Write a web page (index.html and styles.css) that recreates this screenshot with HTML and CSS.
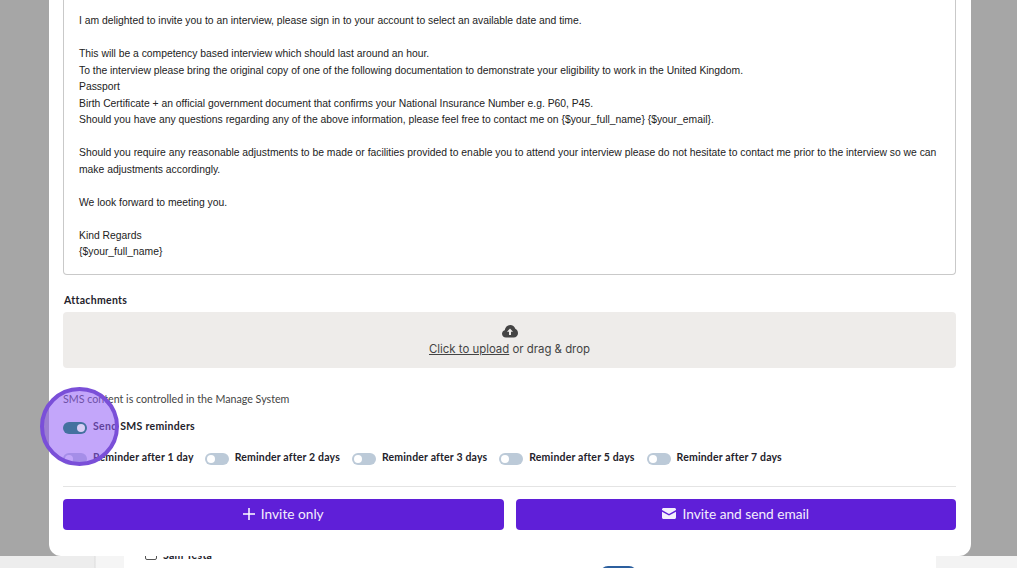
FILE: index.html
```html
<!DOCTYPE html>
<html lang="en">
<head>
    <meta charset="UTF-8">
    <meta name="viewport" content="width=device-width, initial-scale=1.0">
    <title>Invite to interview</title>
    <link rel="stylesheet" href="styles.css">
</head>
<body>
    <div class="backdrop">
        <div class="modal">
            <div class="message">
                <p>I am delighted to invite you to an interview, please sign in to your account to select an available date and time.</p>
                <p>This will be a competency based interview which should last around an hour.<br>
                To the interview please bring the original copy of one of the following documentation to demonstrate your eligibility to work in the United Kingdom.<br>
                Passport<br>
                Birth Certificate + an official government document that confirms your National Insurance Number e.g. P60, P45.<br>
                Should you have any questions regarding any of the above information, please feel free to contact me on {$your_full_name} {$your_email}.</p>
                <p>Should you require any reasonable adjustments to be made or facilities provided to enable you to attend your interview please do not hesitate to contact me prior to the interview so we can make adjustments accordingly.</p>
                <p>We look forward to meeting you.</p>
                <p>Kind Regards<br>
                {$your_full_name}</p>
            </div>

            <div class="label">Attachments</div>
            <div class="upload">
                <svg class="cloud" viewBox="0 0 16 13" width="16" height="13">
                    <path fill="#444" d="M4 12.500C1.800 12.500 0 10.900 0 8.800c0-1.700 1.100-3.100 2.700-3.600C3.200 2.200 5.400 0 8.200 0c2.400 0 4.400 1.500 5.100 3.700C15 4.500 16 6.200 16 8.200c0 2.400-1.900 4.300-4.300 4.300z"/>
                    <path fill="#eeecea" d="M8 3.600l3 3.100H9v3.300H7V6.700H5z"/>
                </svg>
                <div><span class="upload-link">Click to upload</span> or drag &amp; drop</div>
            </div>

            <p class="sms-note">SMS content is controlled in the Manage System</p>
            <div class="toggle-row sms-row">
                <div class="toggle-item"><span class="toggle on"></span>Send SMS reminders</div>
            </div>
            <div class="toggle-row days-row">
                <div class="toggle-item"><span class="toggle"></span>Reminder after 1 day</div>
                <div class="toggle-item"><span class="toggle"></span>Reminder after 2 days</div>
                <div class="toggle-item"><span class="toggle"></span>Reminder after 3 days</div>
                <div class="toggle-item"><span class="toggle"></span>Reminder after 5 days</div>
                <div class="toggle-item"><span class="toggle"></span>Reminder after 7 days</div>
            </div>

            <div class="actions">
                <button class="btn">
                    <svg viewBox="0 0 12 12" width="12" height="12"><path stroke="#fff" stroke-width="1.500" d="M6 0v12M0 6h12"/></svg>
                    <span>Invite only</span>
                </button>
                <button class="btn">
                    <svg viewBox="0 0 14 11" width="14" height="11"><path fill="#f3eefc" d="M1.500 0h11C13.300 0 14 .7 14 1.500v.6L7 6 0 2.100v-.6C0 .7.700 0 1.500 0zM0 3.800l7 3.800 7-3.800v5.700c0 .8-.7 1.500-1.500 1.500h-11C.7 11 0 10.300 0 9.500z"/></svg>
                    <span>Invite and send email</span>
                </button>
            </div>
        </div>
    </div>

    <div class="under">
        <div class="under-side"></div>
        <div class="under-main">
            <span class="check"></span>
            <span class="under-name">Sam Testa</span>
            <span class="pill"></span>
        </div>
        <div class="under-right"></div>
    </div>

    <div class="spotlight"></div>
</body>
</html>
```

FILE: styles.css
```css
:root {
    --purple: #5f1fd8;
    --ink: #23222b;
}
html, body {
    margin: 0;
    height: 568px;
    overflow: hidden;
}
body {
    background: #a6a6a6;
    color: var(--ink);
    font-family: 'Lato', sans-serif;
}
.backdrop {
    height: 556px;
    padding-left: 49px;
}
.modal {
    box-sizing: border-box;
    width: 922px;
    height: 556px;
    background: #fff;
    border-radius: 0 0 12px 12px;
    padding: 0 15px 0 14px;
}
.message {
    box-sizing: border-box;
    height: 275px;
    border: 1px solid #c9c9c9;
    border-top: 0;
    border-radius: 0 0 4px 4px;
    padding: 13px 15px 0;
    font-family: 'Liberation Sans', sans-serif;
    font-size: 10.35px;
    line-height: 16.500px;
    color: #222;
}
.message p {
    margin: 0 0 16.500px;
}
.label {
    margin-top: 19px;
    padding-left: 1px;
    font-size: 10.500px;
    line-height: 13px;
    font-weight: 700;
    letter-spacing: 0.3px;
}
.upload {
    box-sizing: border-box;
    height: 56px;
    margin-top: 5px;
    padding-top: 13px;
    border-radius: 4px;
    background: #eeecea;
    text-align: center;
    font-family: 'Inter', sans-serif;
    font-size: 11.400px;
    line-height: 16px;
    color: #444;
}
.cloud {
    display: block;
    margin: 0 auto 3px;
}
.upload-link {
    text-decoration: underline;
}
.sms-note {
    margin: 24px 0 0;
    font-size: 10.700px;
    line-height: 14px;
    color: #444;
}
.toggle-row {
    display: flex;
    font-size: 10.500px;
    font-weight: 700;
    letter-spacing: 0.17px;
}
.sms-row {
    margin-top: 13px;
    letter-spacing: 0.3px;
}
.days-row {
    margin-top: 16px;
    gap: 12px;
}
.days-row .toggle-item:first-child {
    margin-right: -1px;
}
.toggle-item {
    display: flex;
    align-items: flex-start;
    gap: 6px;
    line-height: 14px;
}
.toggle {
    position: relative;
    width: 24px;
    height: 12px;
    margin-top: 3px;
    border-radius: 6px;
    background: #bccad8;
}
.toggle::after {
    content: "";
    position: absolute;
    top: 2px;
    left: 2px;
    width: 8px;
    height: 8px;
    border-radius: 50%;
    background: #fff;
}
.toggle.on {
    z-index: 3;
    background: #44719f;
}
.toggle.on::after {
    left: 14px;
    background: #d9cdf5;
}
.actions {
    display: grid;
    grid-template-columns: 1fr 1fr;
    gap: 12px;
    margin-top: 21px;
    padding-top: 12px;
    border-top: 1px solid #e4e4e4;
}
.btn {
    display: flex;
    align-items: center;
    justify-content: center;
    gap: 6px;
    height: 31px;
    padding: 0 0 2px;
    border: 0;
    border-radius: 4px;
    background: var(--purple);
    color: #f3eefc;
    font-family: 'Lato', sans-serif;
    font-size: 13.700px;
}
.under {
    display: grid;
    grid-template-columns: 124px 812px 1fr;
    height: 12px;
    overflow: hidden;
}
.under-side {
    background: linear-gradient(90deg, #ededed 0, #ededed 94px, #dcdcdc 95px, #f5f5f5 96px);
}
.under-right {
    background: #f3f3f3;
}
.under-main {
    position: relative;
    background: #fff;
}
.under-name {
    position: absolute;
    top: -7px;
    left: 39px;
    font-size: 10.500px;
    line-height: 13px;
    font-weight: 700;
    letter-spacing: 0.3px;
}
.check {
    position: absolute;
    top: -6px;
    left: 21px;
    width: 10px;
    height: 8px;
    border: 1px solid #555;
    border-radius: 2px;
}
.pill {
    position: absolute;
    top: 10px;
    left: 476px;
    width: 37px;
    height: 16px;
    border-radius: 8px;
    background: #2c5f9e;
}
.spotlight {
    position: absolute;
    z-index: 2;
    top: 387px;
    left: 40px;
    box-sizing: border-box;
    width: 79px;
    height: 79px;
    border: 4px solid #7a4fd8;
    border-radius: 50%;
    background: rgba(146, 92, 246, 0.55);
}
```
